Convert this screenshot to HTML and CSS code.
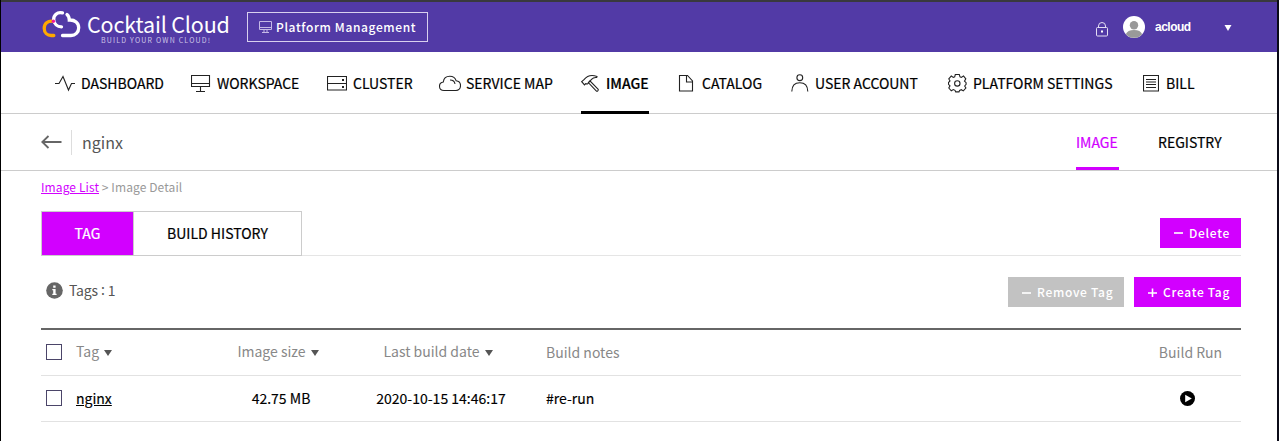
FILE: index.html
```html
<!DOCTYPE html>
<html lang="en">
<head>
<meta charset="utf-8">
<title>Cocktail Cloud</title>
<link rel="stylesheet" href="styles.css">
</head>
<body>
<div class="page">
  <header class="topbar">
    <svg class="logo-mark" width="40" height="30" viewBox="0 0 40 30" fill="none" stroke-width="3.3">
      <path d="M11.500 11.300C5.500 10.300 2.200 14 2.200 18.300c0 4.500 3.300 7.200 7 7.200h2.600" stroke="#ffa800" stroke-linecap="round"/>
      <path d="M20.500 2.900C15 1.500 11.500 5.500 11.700 9.500c.3 4.600 3.600 7.300 7.800 7.300" stroke="#fff" stroke-linecap="round"/>
      <path d="M25 4.500c1.700 1.400 2.300 3.200 2.300 5.500 5.700-.3 9.400 2.800 9.400 7.700 0 4.800-3.500 7.800-7.700 7.800h-8.500" stroke="#fff" stroke-linecap="round"/>
      <circle cx="11.400" cy="11.300" r="1.700" fill="#f0189c"/>
    </svg>
    <div class="brand">
      <span class="brand-name">Cocktail Cloud</span>
      <span class="brand-sub">BUILD YOUR OWN CLOUD!</span>
    </div>
    <div class="platform">
      <svg width="13" height="12" viewBox="0 0 13 12" fill="none" stroke="#c5b9e6"><path d="M.5.5h12v8H.5zM.5 6.500h12M5 8.500v3M8 8.500v3M3 11.500h7"/></svg>
      <span class="platform-text">Platform Management</span>
    </div>
    <div class="user">
      <svg class="lock" width="12" height="15" viewBox="0 0 12 15" fill="none" stroke="#e4def4"><rect x=".5" y="5.500" width="11" height="8.500" rx="1"/><path d="M2.500 5.500V4a3.500 3.500 0 0 1 7 0v1.500"/><rect x="5" y="8.500" width="2" height="2" fill="#fff" stroke="none"/></svg>
      <svg class="avatar" width="22" height="22" viewBox="0 0 22 22"><circle cx="11" cy="11" r="11" fill="#fff"/><circle cx="11" cy="9.200" r="4.200" fill="#999"/><path d="M2.800 18.200c1-2.700 4-4.200 8.200-4.200s7.200 1.500 8.200 4.200A11 11 0 0 1 2.800 18.200z" fill="#999"/></svg>
      <span class="user-name">acloud</span>
      <svg class="caret" width="8" height="6" viewBox="0 0 8 6"><path d="M.500 0h7L4 6z" fill="#fff"/></svg>
    </div>
  </header>

  <nav class="nav">
    <a class="item dashboard"><svg width="20" height="20" viewBox="0 0 20 20"><path d="M0 10.500h4L8 3.500l5.500 13.500 3-6.500H20"/></svg><span>DASHBOARD</span></a>
    <a class="item workspace"><svg width="20" height="20" viewBox="0 0 20 20"><path d="M.5 2.500h18v11H.5zM.5 10.500h18M9.500 13.500v5M5 18.500h9"/></svg><span>WORKSPACE</span></a>
    <a class="item cluster"><svg width="20" height="20" viewBox="0 0 20 20"><path d="M.5 3.500h19v13.500H.5zM.5 10.500h19"/><path class="solid" d="M15 6h2v2h-2zM15 13h2v2h-2z"/></svg><span>CLUSTER</span></a>
    <a class="item service"><svg width="22" height="20" viewBox="0 0 22 20"><path d="M5 17.500C2.300 17.500.5 15.700.5 13.200.5 11 2 9.300 4.300 9c.4-3.400 3-5.700 6.500-5.700 3 0 5.500 1.700 6.300 4.400 2.800.2 4.400 2.200 4.400 4.900 0 2.800-1.900 4.900-4.500 4.900zM11 7c2.600 0 4.700 1.700 5 4"/></svg><span>SERVICE MAP</span></a>
    <a class="item image active"><svg width="20" height="20" viewBox="0 0 20 20"><path d="M.7 8.700 3 6.700C6.500 2.300 11 1.700 16 3.500l-.3 1c-2.200-.3-3.800.3-5.200 1.800L6.500 11l-1.800-.3-1.200 1.200zM7.300 9.600l1.600-1.700 8.100 8.200c.5.6.3 1.300-.2 1.700-.5.500-1.100.500-1.600 0z"/></svg><span>IMAGE</span></a>
    <a class="item catalog"><svg width="18" height="20" viewBox="0 0 18 20"><path d="M1.500 2.500h8l5 5.500v10h-13zM8.500 2.500V9h6"/></svg><span>CATALOG</span></a>
    <a class="item account"><svg width="18" height="20" viewBox="0 0 18 20"><circle cx="8.800" cy="4.700" r="2.900"/><path d="M.8 18.500C.9 13 4 9.800 8.800 9.800s7.900 3.200 8 8.700"/></svg><span>USER ACCOUNT</span></a>
    <a class="item settings"><svg width="19" height="20" viewBox="0 0 19 20"><path d="M7.300 1.500h4l.7 2.300 1.300.6L15.500 3l2.300 2.900-1.300 2.200 1.600 1.600v1.600L16.700 13l1.200 2-2.600 2.900-2-1.200-1.700.7-.6 1.500H7.700L7 17.300l-1.700-.7-2 1.200L.8 15 2 12.800.5 11.300V9.500L2 8 .8 5.900 3.300 3l2 1.400L6.700 3.800z"/><circle cx="9.300" cy="10.400" r="2.700"/></svg><span>PLATFORM SETTINGS</span></a>
    <a class="item bill"><svg width="16" height="20" viewBox="0 0 16 20"><path d="M.5 2.500h15v15.500H.5zM3 6.500h10M3 9h10M3 11.500h10M3 14.500h10"/></svg><span>BILL</span></a>
  </nav>

  <div class="titlebar">
    <svg width="21" height="14" viewBox="0 0 21 14" fill="none" stroke="#666" stroke-width="1.800"><path d="M20.500 7H1.500M7.500 1 1.300 7l6.200 6"/></svg>
    <span class="divider"></span>
    <h1 class="title">nginx</h1>
    <div class="subnav">
      <a class="sub sub-active"><span>IMAGE</span></a>
      <a class="sub sub-registry"><span>REGISTRY</span></a>
    </div>
  </div>

  <main class="content">
    <div class="crumbs"><a class="crumb-link">Image List</a> &gt; Image Detail</div>
    <div class="tabs">
      <div class="tab tab-on">TAG</div>
      <div class="tab tab-off">BUILD HISTORY</div>
      <button class="btn btn-delete"><svg width="10" height="10" viewBox="0 0 10 10"><path d="M0 5h9"/></svg><span>Delete</span></button>
    </div>
    <div class="tools">
      <svg width="17" height="17" viewBox="0 0 17 17"><circle cx="8.500" cy="8.500" r="8.300" fill="#666"/><path d="M7.200 3.500h2.400v2.200H7.200zM6.300 7h3.300v4.700h1V13H6.300v-1.300h.9V8.200h-.9z" fill="#fff"/></svg>
      <span class="count">Tags<span class="colon">:</span>1</span>
      <button class="btn btn-remove"><svg width="10" height="10" viewBox="0 0 10 10"><path d="M0 6h9"/></svg><span>Remove Tag</span></button>
      <button class="btn btn-create"><svg width="10" height="10" viewBox="0 0 10 10"><path d="M0 6h9M4.500 1.500v9"/></svg><span>Create Tag</span></button>
    </div>
    <div class="table">
      <div class="row head">
        <span class="box"></span>
        <span class="c-tag"><span>Tag</span><i class="sort"></i></span>
        <span class="c-size"><span>Image size</span><i class="sort"></i></span>
        <span class="c-date"><span>Last build date</span><i class="sort"></i></span>
        <span class="c-notes">Build notes</span>
        <span class="c-run">Build Run</span>
      </div>
      <div class="row body-row">
        <span class="box"></span>
        <span class="c-tag"><a class="tag-link">nginx</a></span>
        <span class="c-size">42.75 MB</span>
        <span class="c-date">2020-10-15 14:46:17</span>
        <span class="c-notes">#re-run</span>
        <span class="c-run"><svg width="15" height="15" viewBox="0 0 15 15"><circle cx="7.500" cy="7.500" r="7.500"/><path d="M5.200 3.700v7.600l6.600-3.800z" fill="#fff"/></svg></span>
      </div>
    </div>
  </main>
</div>
</body>
</html>
```
FILE: styles.css
```css
* { box-sizing: border-box; }
body {
  margin: 0;
  font-family: "Noto Sans CJK KR", "Noto Sans", sans-serif;
  font-size: 14px;
  color: #000;
  background: #fff;
}
svg { display: block; flex: none; }
.page {
  width: 1279px;
  height: 441px;
  overflow: hidden;
  border-left: 1px solid #000;
  border-right: 2px solid #0b0b18;
  white-space: nowrap;
}
.topbar {
  display: flex;
  height: 52px;
  border-top: 2px solid #39393d;
  background: #523aa6;
  color: #fff;
}
.logo-mark { margin: 8px 0 0 41px; }
.brand { width: 144px; margin-left: 5px; }
.brand-name { display: block; font-size: 21.500px; line-height: 26px; margin-top: 9px; font-weight: 400; letter-spacing: -.15px; }
.brand-sub { display: block; font-size: 7px; line-height: 7px; margin-left: 14px; letter-spacing: 1.200px; color: #cdc4e6; }
.platform {
  display: flex;
  align-items: center;
  width: 181px;
  height: 30px;
  margin: 10px 0 0 16px;
  padding-left: 11px;
  border: 1px solid #d8d0ee;
}
.platform-text { margin: 0 0 2px 4px; font-size: 12px; font-weight: 500; letter-spacing: .63px; }
.user { display: flex; align-items: center; margin-left: auto; width: 181px; }
.lock { margin-top: 4px; }
.avatar { margin-left: 15px; }
.user-name { margin-left: 10px; width: 69px; font: bold 12px "Liberation Sans", sans-serif; letter-spacing: -.5px; }
.caret { margin-top: 2px; }
.nav { display: flex; height: 62px; border-bottom: 1px solid #ccc; padding-left: 54px; }
.item { display: flex; align-items: center; height: 62px; -webkit-text-stroke: .2px currentColor; }
.item svg { fill: none; stroke: #222; stroke-width: 1.100; }
.item .solid { fill: #222; stroke: none; }
.item span { margin-left: 6px; line-height: 20px; }
.item.service span, .item.image span { margin-left: 5px; }
.item.catalog span { margin-left: 6px; }
.dashboard { width: 136px; }
.workspace { width: 136px; }
.cluster { width: 112px; }
.service { width: 142px; }
.image { width: 68px; border-bottom: 3px solid #000; margin-right: 29px; font-weight: 500; }
.active svg, .active span { margin-top: 3px; }
.catalog { width: 113px; }
.account { width: 157px; }
.settings { width: 195px; }
.item.bill span { margin-left: 7px; }
.titlebar { display: flex; align-items: center; height: 57px; border-bottom: 1px solid #ccc; padding-left: 40px; }
.divider { width: 1px; height: 25px; margin-left: 9px; background: #ddd; }
.title { margin: 0 0 0 10px; font-size: 16px; font-weight: 400; color: #555; }
.subnav { display: flex; margin-left: auto; align-self: stretch; width: 201px; -webkit-text-stroke: .2px currentColor; }
.sub { display: flex; align-items: center; height: 56px; }
.sub-active { width: 43px; margin-right: 39px; padding-top: 3px; border-bottom: 3px solid #d200ff; color: #d200ff; }
.content { width: 1200px; margin-left: 40px; }
.crumbs { height: 40px; padding-top: 6px; line-height: 20px; font-size: 12px; letter-spacing: .1px; color: #999; }
.crumb-link { color: #d200ff; text-decoration: underline; }
.tabs { display: flex; height: 45px; border-bottom: 1px solid #e5e5e5; }
.tab { height: 45px; border: 1px solid #ccc; text-align: center; line-height: 43px; -webkit-text-stroke: .2px currentColor; }
.tab-on { width: 92px; background: #d200ff; color: #fff; border-right: 0; }
.tab-off { width: 169px; }
.btn {
  display: flex;
  align-items: center;
  height: 30px;
  padding: 0 0 0 14px;
  border: 0;
  background: #d200ff;
  color: #fff;
  font: 500 12px "Noto Sans CJK KR", sans-serif;
  letter-spacing: .7px;
}
.btn svg { stroke: #fff; stroke-width: 1.600; }
.btn span { margin-left: 5px; margin-bottom: 2px; }
.btn-delete { width: 81px; margin: 7px 0 0 auto; }
.tools { display: flex; height: 72px; padding: 21px 0 0 5px; }
.tools > svg { margin-top: 5px; }
.count { margin-left: 6px; line-height: 27px; color: #555; letter-spacing: -.15px; }
.colon { position: relative; top: -1px; margin: 0 3px; }
.btn-remove { width: 116px; margin: 0 10px 0 auto; background: #c2c2c2; }
.btn-create { width: 107px; }
.table { border-top: 2px solid #666; }
.row { display: grid; grid-template-columns: 35px 140px 130px 200px 588px 107px; align-items: center; height: 46px; padding-bottom: 1px; border-bottom: 1px solid #e2e2e2; }
.box { width: 16px; height: 16px; margin-left: 5px; border: 1px solid #4b4569; }
.head { height: 46px; color: #888; }
.c-tag, .c-size, .c-date, .c-run { display: flex; align-items: center; }
.c-size, .c-date, .c-run { justify-content: center; }
.c-date { padding-right: 10px; }
.head .c-size { padding-right: 6px; }
.head .c-date { padding-right: 16px; }
.head .c-tag, .head .c-size, .head .c-date { margin-top: -2px; }
.head .c-run { padding-left: 6px; }
.sort { margin: 4px 0 0 5px; border: 4px solid transparent; border-top: 6px solid #555; border-bottom: 0; }
.body-row { -webkit-text-stroke: .15px currentColor; }
.tag-link { text-decoration: underline; }
```
